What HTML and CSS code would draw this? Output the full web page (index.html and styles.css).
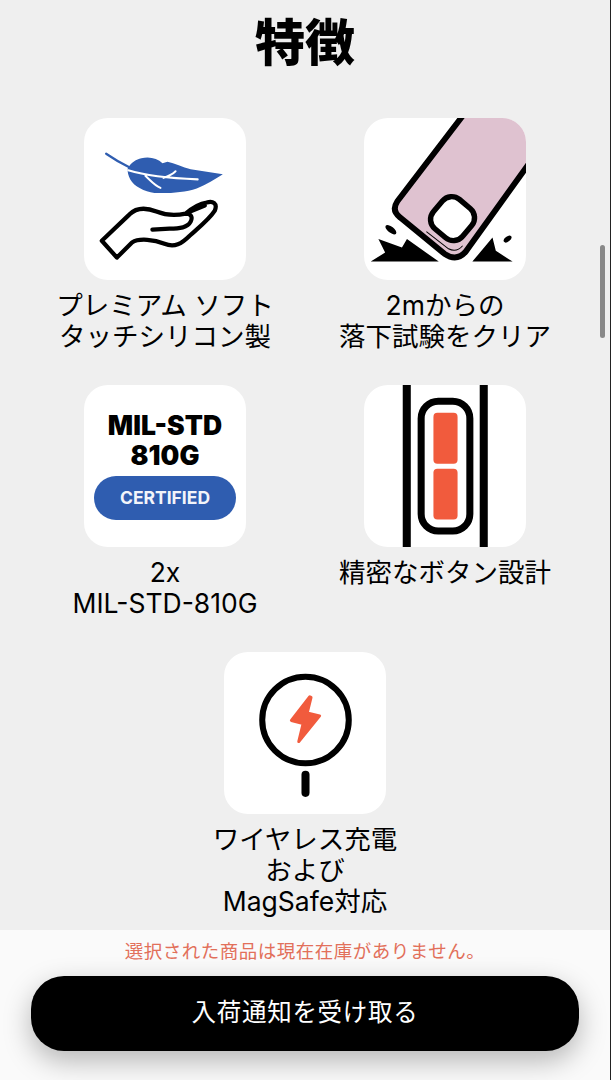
FILE: index.html
```html
<!DOCTYPE html>
<html lang="ja">
<head>
<meta charset="utf-8">
<title>特徴</title>
<link rel="stylesheet" href="styles.css">
</head>
<body>
<div class="page">
  <main class="content">
    <h1 class="title">特徴</h1>
    <div class="grid">
      <div class="item">
        <div class="card">
          <svg class="icon" viewBox="0 0 161 161">
            <path class="stem" d="M22 35.5C30 41 37 45 45 49"/>
            <path class="blue" d="M43.5 50C47 44 52 41 57 40C65 38 73 40 78 45L83 43.5C90 45 98 49 106 51L138 56C130 61 122 66 112 70C100 74 85 75 70 74.5C60 73 50 68 46 61C44 57 43 54 43.5 50Z"/>
            <path class="vein" d="M44 52C60 57 85 60 113 61M61 57.5C66 62 70 67 76 69.5M79 59.5C84 58 88 56 91 53"/>
            <path class="hand" d="M17.7 122L32.7 138.7L47.7 123.7C55 119 70 121 80 125C90 129 97 125 105 117C115 108 125 100 130 92C133 85 128 82 122 84C115 85 108 89 101 95C92 97 82 97 72 93C62 89 52 89 45 96ZM101 95C107 95 108 99 106 103C103 109 95 110 85 110L68 111M103 94L120 87"/>
          </svg>
        </div>
        <p class="label">プレミアム ソフト<br>タッチシリコン製</p>
      </div>
      <div class="item">
        <div class="card">
          <svg class="icon" viewBox="0 0 161 161">
            <path class="phone" d="M101 -6L33 83Q27 92 36 99L80 135Q92 143 101 133L170 37L170 -6Z"/>
            <path class="thin" d="M62 113L84 130Q92 134 98 127"/>
            <rect class="camera" x="69" y="81" width="38" height="38" rx="12" transform="rotate(40 88 100)"/>
            <path class="black" d="M6.7 142.7H74.3L42.7 120.3L37.7 128.7L14.3 120.3L21 133.7ZM107.7 142.7H147.7L131 132L127.7 118.7Z"/>
            <ellipse class="black" cx="26.7" cy="111" rx="6.5" ry="3" transform="rotate(38 26.7 111)"/>
            <ellipse class="black" cx="142.7" cy="120.3" rx="4.5" ry="2.5" transform="rotate(-38 142.7 120.3)"/>
          </svg>
        </div>
        <p class="label">2mからの<br>落下試験をクリア</p>
      </div>
      <div class="item">
        <div class="card badge">
          <div class="badge-title">MIL-STD<br>810G</div>
          <div class="badge-pill">CERTIFIED</div>
        </div>
        <p class="label">2x<br>MIL-STD-810G</p>
      </div>
      <div class="item">
        <div class="card">
          <svg class="icon" viewBox="0 0 161 161">
            <rect class="black" x="38.5" y="0" width="8" height="161"/>
            <rect class="black" x="115" y="0" width="8" height="161"/>
            <rect class="pill" x="56.8" y="16.2" width="48.4" height="129" rx="17"/>
            <rect class="orange" x="69" y="27.7" width="24" height="50.6" rx="4"/>
            <rect class="orange" x="69" y="83.3" width="24" height="50.4" rx="4"/>
          </svg>
        </div>
        <p class="label">精密なボタン設計</p>
      </div>
      <div class="item item-wide">
        <div class="card">
          <svg class="icon" viewBox="0 0 161 161">
            <circle class="ring" cx="81" cy="67.5" r="43"/>
            <rect class="black" x="77" y="118" width="8" height="26" rx="4"/>
            <path class="bolt" d="M85.3 44.5L67 68L78.7 71L74.3 89L95 63.5L82.7 60.5L86.5 45Z"/>
          </svg>
        </div>
        <p class="label">ワイヤレス充電<br>および<br>MagSafe対応</p>
      </div>
    </div>
  </main>
  <footer class="footer">
    <p class="notice">選択された商品は現在在庫がありません。</p>
    <button class="cta" type="button">入荷通知を受け取る</button>
  </footer>
  <div class="scrollbar"></div>
</div>
</body>
</html>
```

FILE: styles.css
```css
* { box-sizing: border-box; }
html, body { margin: 0; padding: 0; }
body {
  background: #222;
  color: #000;
  font-family: "Inter", "Noto Sans CJK JP", sans-serif;
}
.page {
  position: relative;
  width: 610px;
  height: 1080px;
  overflow: hidden;
  display: flex;
  flex-direction: column;
  background: #efefef;
}
.content { flex: 1; min-height: 0; }
.title {
  margin: 0;
  height: 118px;
  padding-top: 7px;
  text-align: center;
  font-family: "Noto Sans CJK JP", sans-serif;
  font-size: 50px;
  font-weight: 900;
  line-height: 64px;
}
.grid {
  display: grid;
  grid-template-columns: 280px 280px;
  justify-content: center;
  justify-items: center;
  grid-auto-rows: 267px;
}
.item {
  display: flex;
  flex-direction: column;
  align-items: center;
}
.item-wide { grid-column: 1 / 3; }
.card {
  width: 162px;
  height: 162px;
  flex: none;
  background: #fff;
  border-radius: 24px;
  overflow: hidden;
}
.icon { display: block; width: 162px; height: 162px; }
.label {
  margin: 10px 0 0;
  text-align: center;
  font-size: 26.5px;
  line-height: 31px;
  white-space: nowrap;
}
.stem { fill: none; stroke: #2f5db0; stroke-width: 2.2; stroke-linecap: round; }
.blue { fill: #2f5db0; }
.vein { fill: none; stroke: #fff; stroke-width: 2; stroke-linecap: round; }
.hand { fill: none; stroke: #000; stroke-width: 4.2; stroke-linejoin: round; stroke-linecap: round; }
.phone { fill: #dfc2d0; stroke: #000; stroke-width: 5.8; stroke-linejoin: round; }
.thin { fill: none; stroke: #000; stroke-width: 1; }
.camera { fill: #fff; stroke: #000; stroke-width: 5.4; }
.black { fill: #000; }
.pill { fill: none; stroke: #000; stroke-width: 7; }
.orange { fill: #f15b3d; }
.ring { fill: none; stroke: #000; stroke-width: 6; }
.bolt { fill: #f15b3d; stroke: #f15b3d; stroke-width: 3; stroke-linejoin: round; }
.badge {
  display: flex;
  flex-direction: column;
  align-items: center;
  padding-top: 25px;
}
.badge-title {
  text-align: center;
  font-size: 26.5px;
  font-weight: 900;
  line-height: 30px;
}
.badge-pill {
  width: 142px;
  height: 44px;
  margin-top: 6px;
  border-radius: 22px;
  background: #2f5db0;
  color: #f2f4fa;
  text-align: center;
  font-size: 17.5px;
  font-weight: 700;
  line-height: 44px;
}
.footer {
  flex: none;
  height: 150px;
  background: #fafafa;
  padding-top: 8px;
  display: flex;
  flex-direction: column;
  align-items: center;
}
.notice {
  margin: 0;
  color: #e2705a;
  font-size: 18.5px;
  line-height: 26px;
  letter-spacing: .5px;
}
.cta {
  width: 548px;
  height: 75px;
  margin-top: 12px;
  padding: 0 0 6px;
  border: 0;
  border-radius: 33px;
  background: #000;
  color: #fff;
  font-family: inherit;
  font-size: 24.5px;
  letter-spacing: .7px;
  box-shadow: 0 10px 28px rgba(0, 0, 0, .28);
}
.scrollbar {
  position: absolute;
  left: 600px;
  top: 245px;
  width: 5px;
  height: 93px;
  border-radius: 3px;
  background: #888;
}
```
